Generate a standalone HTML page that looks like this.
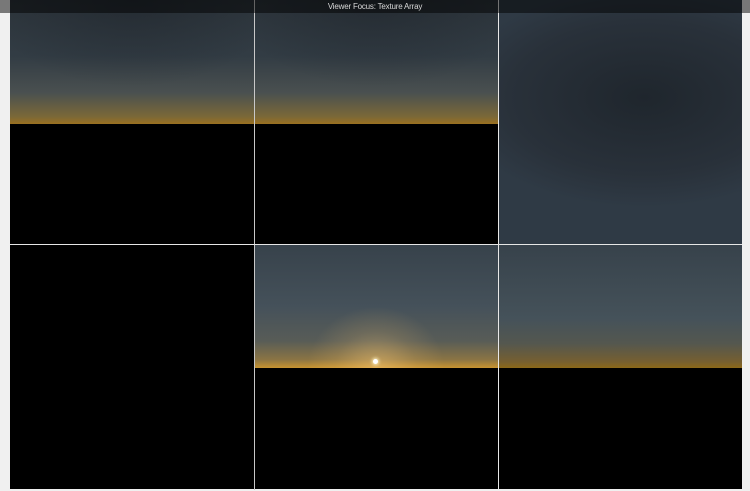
<!DOCTYPE html>
<html><head><meta charset="utf-8"><style>
html,body{margin:0;padding:0;width:750px;height:491px;background:#f0f0f0;overflow:hidden;position:relative;font-family:"Liberation Sans",sans-serif}
.c{position:absolute;width:244px;height:244px;overflow:hidden}
.sky1{background:linear-gradient(to bottom,#2d353c 0%,#323c44 45%,#4a5050 75%,#7a6838 94%,#9a7020 100%)}
.glow{position:absolute;left:0;right:0;height:124px;top:0;background:radial-gradient(ellipse 60% 70% at 50% 0%,rgba(20,24,30,.35),rgba(0,0,0,0))}
.vl{position:absolute;top:0;width:1px;height:490px;background:#bdbdbd}
</style></head><body>
<div class="c" style="left:10px;top:0;background:#000">
 <div style="position:absolute;left:0;right:0;top:0;height:124px" class="sky1"></div><div class="glow"></div>
</div>
<div class="c" style="left:254px;top:0;background:#000">
 <div style="position:absolute;left:0;right:0;top:0;height:124px" class="sky1"></div><div class="glow"></div>
</div>
<div class="c" style="left:498px;top:0;background:radial-gradient(ellipse 80% 45% at 60% 40%,#1f262d,#29313a 70%,#2f3a45)"></div>
<div class="c" style="left:10px;top:245px;background:#000"></div>
<div class="c" style="left:254px;top:245px;background:#000">
 <div style="position:absolute;left:0;right:0;top:0;height:123px;background:linear-gradient(to bottom,#37424b 0%,#45515a 50%,#585c57 78%,#8a7444 93%,#c89430 100%)"></div>
 <div style="position:absolute;left:0;right:0;top:0;height:123px;background:radial-gradient(ellipse 28% 50% at 50% 100%,rgba(255,205,120,.5),rgba(255,200,110,.15) 60%,rgba(255,200,110,0))"></div>
 <div style="position:absolute;left:119px;top:114px;width:5px;height:5px;border-radius:50%;background:#fff;box-shadow:0 0 3px 1px #fff3c0"></div>
</div>
<div class="c" style="left:498px;top:245px;background:#000">
 <div style="position:absolute;left:0;right:0;top:0;height:123px;background:linear-gradient(to bottom,#37424b 0%,#45525a 60%,#54574f 80%,#765f30 95%,#8c6818 100%)"></div>
</div>
<div class="vl" style="left:254px;background:#c8c8c8"></div>
<div class="vl" style="left:498px;background:#e8e8e8"></div>
<div style="position:absolute;left:10px;top:244px;width:732px;height:1px;background:#e6e6e6"></div>
<div style="position:absolute;left:0;top:0;width:750px;height:13px;background:rgba(0,0,0,.5);color:#d8d8d8;font-size:8px;line-height:13px;text-align:center;letter-spacing:-0.2px">Viewer Focus: Texture Array</div>
</body></html>
